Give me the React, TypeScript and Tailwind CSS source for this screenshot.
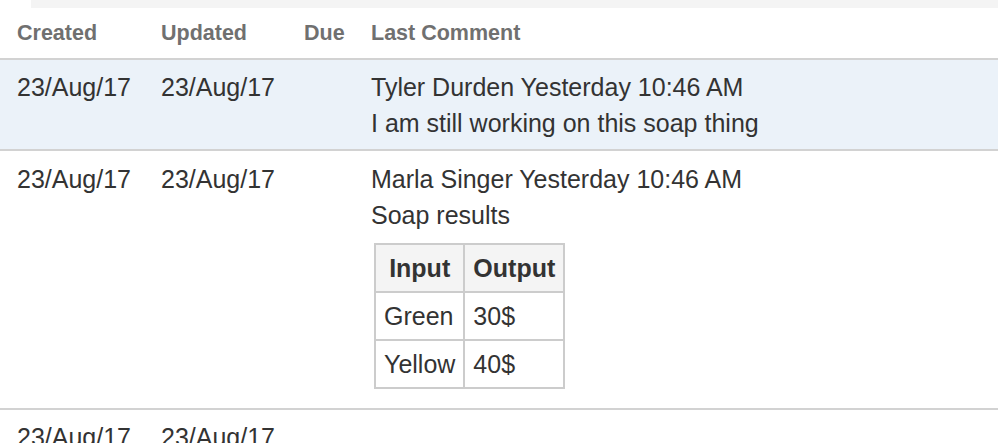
import React from "react";

const font = { fontFamily: '"Liberation Sans", Arial, sans-serif' };

function Dates() {
  return (
    <>
      <div>23/Aug/17</div>
      <div>23/Aug/17</div>
      <div></div>
    </>
  );
}

export default function App() {
  return (
    <div className="w-[998px] h-[443px] overflow-hidden bg-white text-[#333333]" style={font}>
      <div className="h-[8px] ml-[31px] bg-[#f4f4f4]" />
      <div className="grid grid-cols-[144px_143px_67px_1fr] pl-[17px] pt-[10px] pb-[10px] h-[50px] text-[21.5px] leading-[30px] font-bold text-[#707070]">
        <div>Created</div>
        <div>Updated</div>
        <div>Due</div>
        <div>Last Comment</div>
      </div>
      <div className="border-t-2 border-[#d2d2d2]" />
      <div className="grid grid-cols-[144px_143px_67px_1fr] pl-[17px] pt-[9px] pb-[8px] bg-[#ebf2f9] text-[25px] leading-[36px]">
        <Dates />
        <div>
          <div>Tyler Durden Yesterday 10:46 AM</div>
          <div>I am still working on this soap thing</div>
        </div>
      </div>
      <div className="border-t-2 border-[#d2d2d2]" />
      <div className="grid grid-cols-[144px_143px_67px_1fr] pl-[17px] pt-[10px] pb-[9px] text-[25px] leading-[36px]">
        <Dates />
        <div>
          <div>Marla Singer Yesterday 10:46 AM</div>
          <div>Soap results</div>
          <table className="mt-[10px] mb-[10px] ml-[3px] border-collapse border-2 border-[#cccccc]">
            <thead>
              <tr className="bg-[#f4f4f4]">
                <th className="border-2 border-[#cccccc] px-[8px] py-[5px] font-bold text-center">Input</th>
                <th className="border-2 border-[#cccccc] px-[8px] py-[5px] font-bold text-center">Output</th>
              </tr>
            </thead>
            <tbody>
              <tr>
                <td className="border-2 border-[#cccccc] px-[8px] py-[5px]">Green</td>
                <td className="border-2 border-[#cccccc] px-[8px] py-[5px]">30$</td>
              </tr>
              <tr>
                <td className="border-2 border-[#cccccc] px-[8px] py-[5px]">Yellow</td>
                <td className="border-2 border-[#cccccc] px-[8px] py-[5px]">40$</td>
              </tr>
            </tbody>
          </table>
        </div>
      </div>
      <div className="border-t-2 border-[#d2d2d2]" />
      <div className="grid grid-cols-[144px_143px_67px_1fr] pl-[17px] pt-[9px] pb-[8px] text-[25px] leading-[36px]">
        <Dates />
        <div></div>
      </div>
    </div>
  );
}
